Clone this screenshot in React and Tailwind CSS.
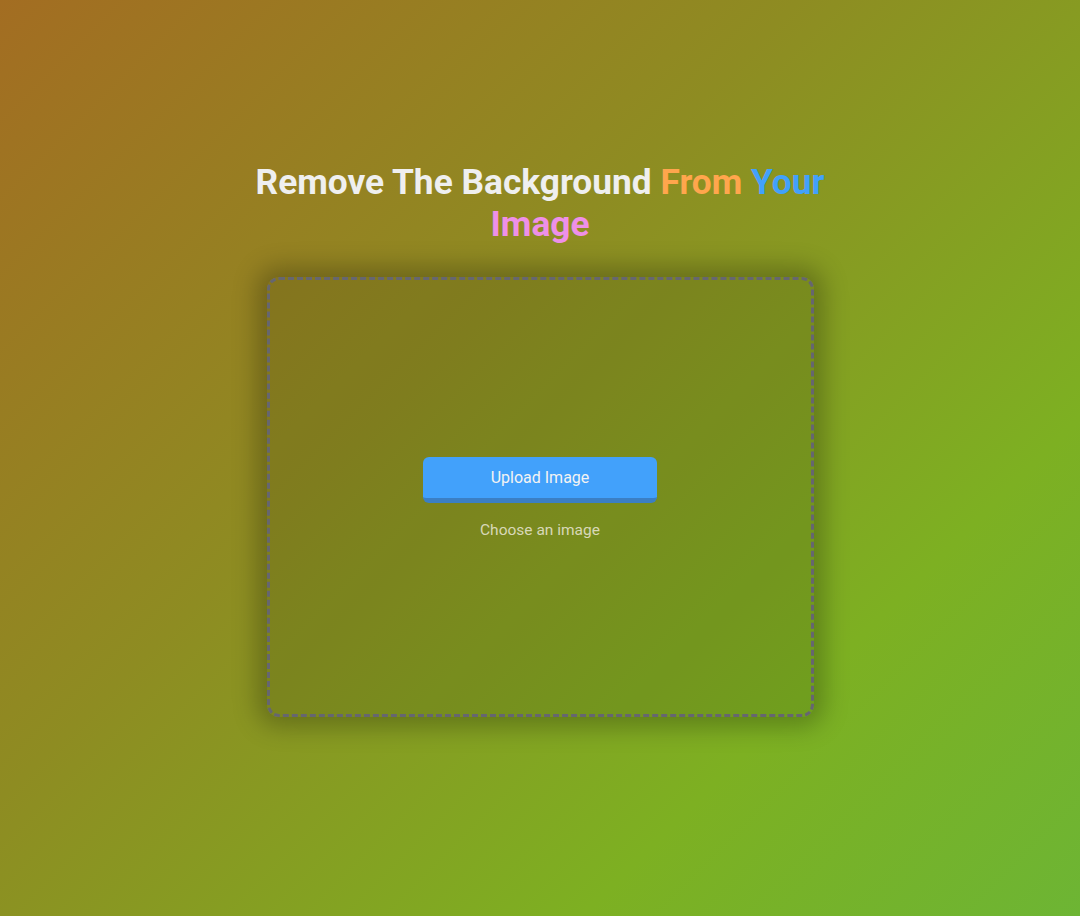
export default function App() {
  return (
    <div
      className="min-h-screen w-full flex flex-col items-center bg-[linear-gradient(135deg,#a36d22_0%,#8e8c22_40%,#7db022_75%,#6db534_100%)]"
      style={{ fontFamily: 'Roboto, "Liberation Sans", sans-serif' }}
    >
      <h1 className="mt-[161px] w-[600px] text-center text-[35.3px] leading-[42px] font-bold text-[#efefef]">
        Remove The Background <span className="text-[#ffa64d]">From</span>{' '}
        <span className="text-[#42a1fb]">Your</span>{' '}
        <span className="text-[#ee90e8]">Image</span>
      </h1>

      <div className="mt-[32px] w-[547px] h-[440px] pt-[6px] rounded-[12px] border-[3px] border-dashed border-[#666670] bg-black/10 shadow-[0_0_25px_10px_rgba(0,0,0,0.25)] flex flex-col items-center justify-center">
        <button className="w-[234px] h-[46px] rounded-[6px] bg-[#42a1fb] border-b-[5px] border-[#3b7fc4] text-[#f3f3f3] text-[16px] font-normal">
          Upload Image
        </button>
        <p className="mt-[16px] text-[15.5px] text-[#d8d8b8]">Choose an image</p>
      </div>
    </div>
  );
}
